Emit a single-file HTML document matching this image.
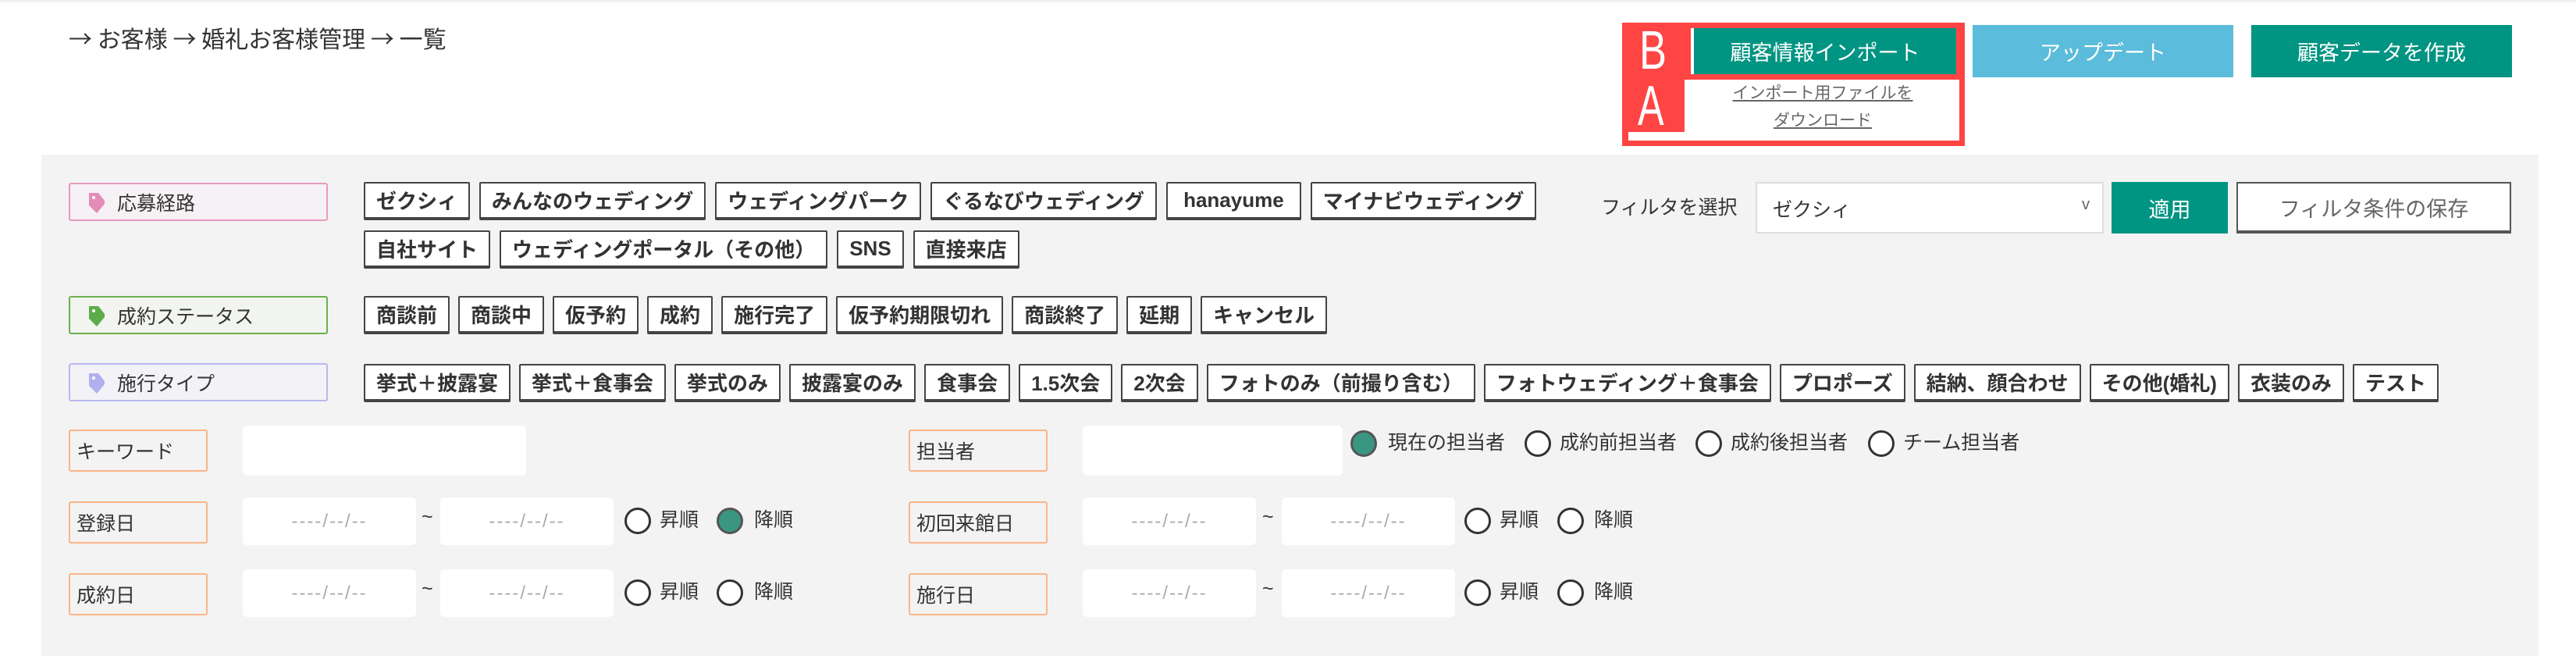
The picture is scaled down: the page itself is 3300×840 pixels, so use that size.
<!DOCTYPE html>
<html><head><meta charset="utf-8"><style>
*{box-sizing:border-box;margin:0;padding:0}
body{width:3300px;height:840px;background:#fff;position:relative;overflow:hidden;font-family:"Liberation Sans","Noto Sans CJK JP",sans-serif;color:#333}
.a{position:absolute}
.panel{left:53px;top:198px;width:3199px;height:642px;background:#f3f3f3}
.btn{position:absolute;color:#fff;font-size:27px;display:flex;align-items:center;justify-content:center}
.lbl{position:absolute;left:88px;width:332px;height:49px;border:2px solid;border-radius:3px;font-size:25px;display:flex;align-items:center;padding-left:60px}
.lbl svg{position:absolute;left:22px;top:9px}
.row{position:absolute;left:466px;display:flex;gap:12px}
.tag{height:49px;background:#fff;border:2px solid #444;border-bottom:4px solid #444;border-radius:2px;font-size:26px;font-weight:bold;padding:0 14px;display:flex;align-items:center;white-space:nowrap}
.ol{position:absolute;width:178px;height:54px;border:2px solid #fbb48a;border-radius:3px;font-size:25px;display:flex;align-items:center;padding-left:8px}
.in{position:absolute;background:#fff;border-radius:6px}
.dt{position:absolute;background:#fff;border-radius:6px;width:222px;height:61px;color:#aaa;font-size:24px;letter-spacing:2px;display:flex;align-items:center;justify-content:center}
.r{position:absolute;width:34px;height:34px;border:3px solid #333;border-radius:50%;background:#fff}
.r.on{background:#3a9680;border-color:#555}
.t{position:absolute;font-size:25px}
</style></head><body>
<div class="a" style="left:0;top:0;width:3300px;height:3px;background:#f0f0f0"></div>
<div class="a" style="left:88px;top:26px;font-size:30px;font-family:'Noto Sans CJK JP',sans-serif">→ お客様 → 婚礼お客様管理 → 一覧</div>

<div class="a" style="left:2078px;top:29px;width:439px;height:158px;background:#f44"></div>
<div class="a" style="left:2158px;top:102px;width:352px;height:78px;background:#fff"></div>
<div class="a" style="left:2086px;top:169px;width:80px;height:11px;background:#fff"></div>
<div class="btn" style="left:2166px;top:36px;width:340px;height:59px;background:#009482;border-left:4px solid #fff">顧客情報インポート</div>
<div class="a" style="left:2100px;top:24px;font-size:70px;line-height:80px;color:#fff;transform:scaleX(.75);transform-origin:left">B</div>
<div class="a" style="left:2098px;top:96px;font-size:72px;line-height:80px;color:#fff;transform:scaleX(.7);transform-origin:left">A</div>
<div class="a" style="left:2160px;top:102px;width:350px;text-align:center;font-size:21px;color:#666;line-height:35px;text-decoration:underline">インポート用ファイルを<br>ダウンロード</div>

<div class="btn" style="left:2527px;top:32px;width:334px;height:67px;background:#5bbcdb">アップデート</div>
<div class="btn" style="left:2884px;top:32px;width:334px;height:67px;background:#009482">顧客データを作成</div>

<div class="a panel"></div>

<div class="lbl" style="top:234px;border-color:#e89ac0;background:#f6f1f4"><svg width="24" height="30" viewBox="0 0 24 30"><path d="M2 2h12l8 10v4l-10 12L2 18z" fill="#e48cb8"/><circle cx="8" cy="8" r="2" fill="#fff"/></svg>応募経路</div>
<div class="lbl" style="top:379px;border-color:#6ab04c;background:#f1f4ef"><svg width="24" height="30" viewBox="0 0 24 30"><path d="M2 2h12l8 10v4l-10 12L2 18z" fill="#5cad4a"/><circle cx="8" cy="8" r="2" fill="#fff"/></svg>成約ステータス</div>
<div class="lbl" style="top:465px;border-color:#b8b8f0;background:#f3f3f7"><svg width="24" height="30" viewBox="0 0 24 30"><path d="M2 2h12l8 10v4l-10 12L2 18z" fill="#b0b0ee"/><circle cx="8" cy="8" r="2" fill="#fff"/></svg>施行タイプ</div>

<div class="row" style="top:233px"><div class="tag">ゼクシィ</div><div class="tag">みんなのウェディング</div><div class="tag">ウェディングパーク</div><div class="tag">ぐるなびウェディング</div><div class="tag" style="padding:0 20px">hanayume</div><div class="tag">マイナビウェディング</div></div>
<div class="row" style="top:295px"><div class="tag">自社サイト</div><div class="tag">ウェディングポータル（その他）</div><div class="tag">SNS</div><div class="tag">直接来店</div></div>
<div class="row" style="top:379px;gap:11px"><div class="tag">商談前</div><div class="tag">商談中</div><div class="tag">仮予約</div><div class="tag">成約</div><div class="tag">施行完了</div><div class="tag">仮予約期限切れ</div><div class="tag">商談終了</div><div class="tag">延期</div><div class="tag">キャンセル</div></div>
<div class="row" style="top:466px;gap:11px"><div class="tag">挙式＋披露宴</div><div class="tag">挙式＋食事会</div><div class="tag">挙式のみ</div><div class="tag">披露宴のみ</div><div class="tag">食事会</div><div class="tag">1.5次会</div><div class="tag">2次会</div><div class="tag">フォトのみ（前撮り含む）</div><div class="tag">フォトウェディング＋食事会</div><div class="tag">プロポーズ</div><div class="tag">結納、顔合わせ</div><div class="tag">その他(婚礼)</div><div class="tag">衣装のみ</div><div class="tag">テスト</div></div>

<div class="t" style="left:2051px;top:246px">フィルタを選択</div>
<div class="a" style="left:2249px;top:233px;width:446px;height:66px;background:#fff;border:2px solid #ddd;font-size:25px;padding:14px 20px">ゼクシィ<span style="position:absolute;right:16px;top:16px;color:#666;font-size:20px">v</span></div>
<div class="btn" style="left:2705px;top:233px;width:149px;height:66px;background:#009482">適用</div>
<div class="a" style="left:2865px;top:233px;width:352px;height:66px;background:#fff;border:2px solid #555;border-bottom-width:4px;font-size:27px;color:#666;display:flex;align-items:center;justify-content:center">フィルタ条件の保存</div>

<div class="ol" style="left:88px;top:550px">キーワード</div>
<div class="ol" style="left:88px;top:642px">登録日</div>
<div class="ol" style="left:88px;top:734px">成約日</div>
<div class="in" style="left:311px;top:545px;width:363px;height:64px"></div>
<div class="dt" style="left:311px;top:637px">----/--/--</div><div class="t" style="left:540px;top:648px">~</div><div class="dt" style="left:564px;top:637px">----/--/--</div>
<div class="dt" style="left:311px;top:729px">----/--/--</div><div class="t" style="left:540px;top:740px">~</div><div class="dt" style="left:564px;top:729px">----/--/--</div>
<div class="r" style="left:800px;top:650px"></div><div class="t" style="left:845px;top:646px">昇順</div><div class="r on" style="left:918px;top:650px"></div><div class="t" style="left:966px;top:646px">降順</div>
<div class="r" style="left:800px;top:742px"></div><div class="t" style="left:845px;top:738px">昇順</div><div class="r" style="left:918px;top:742px"></div><div class="t" style="left:966px;top:738px">降順</div>

<div class="ol" style="left:1164px;top:550px">担当者</div>
<div class="ol" style="left:1164px;top:642px">初回来館日</div>
<div class="ol" style="left:1164px;top:734px">施行日</div>
<div class="in" style="left:1387px;top:545px;width:333px;height:64px"></div>
<div class="r on" style="left:1730px;top:551px"></div><div class="t" style="left:1778px;top:547px">現在の担当者</div>
<div class="r" style="left:1953px;top:551px"></div><div class="t" style="left:1998px;top:547px">成約前担当者</div>
<div class="r" style="left:2172px;top:551px"></div><div class="t" style="left:2217px;top:547px">成約後担当者</div>
<div class="r" style="left:2393px;top:551px"></div><div class="t" style="left:2438px;top:547px">チーム担当者</div>
<div class="dt" style="left:1387px;top:637px">----/--/--</div><div class="t" style="left:1617px;top:648px">~</div><div class="dt" style="left:1642px;top:637px">----/--/--</div>
<div class="dt" style="left:1387px;top:729px">----/--/--</div><div class="t" style="left:1617px;top:740px">~</div><div class="dt" style="left:1642px;top:729px">----/--/--</div>
<div class="r" style="left:1876px;top:650px"></div><div class="t" style="left:1921px;top:646px">昇順</div><div class="r" style="left:1995px;top:650px"></div><div class="t" style="left:2042px;top:646px">降順</div>
<div class="r" style="left:1876px;top:742px"></div><div class="t" style="left:1921px;top:738px">昇順</div><div class="r" style="left:1995px;top:742px"></div><div class="t" style="left:2042px;top:738px">降順</div>
</body></html>
